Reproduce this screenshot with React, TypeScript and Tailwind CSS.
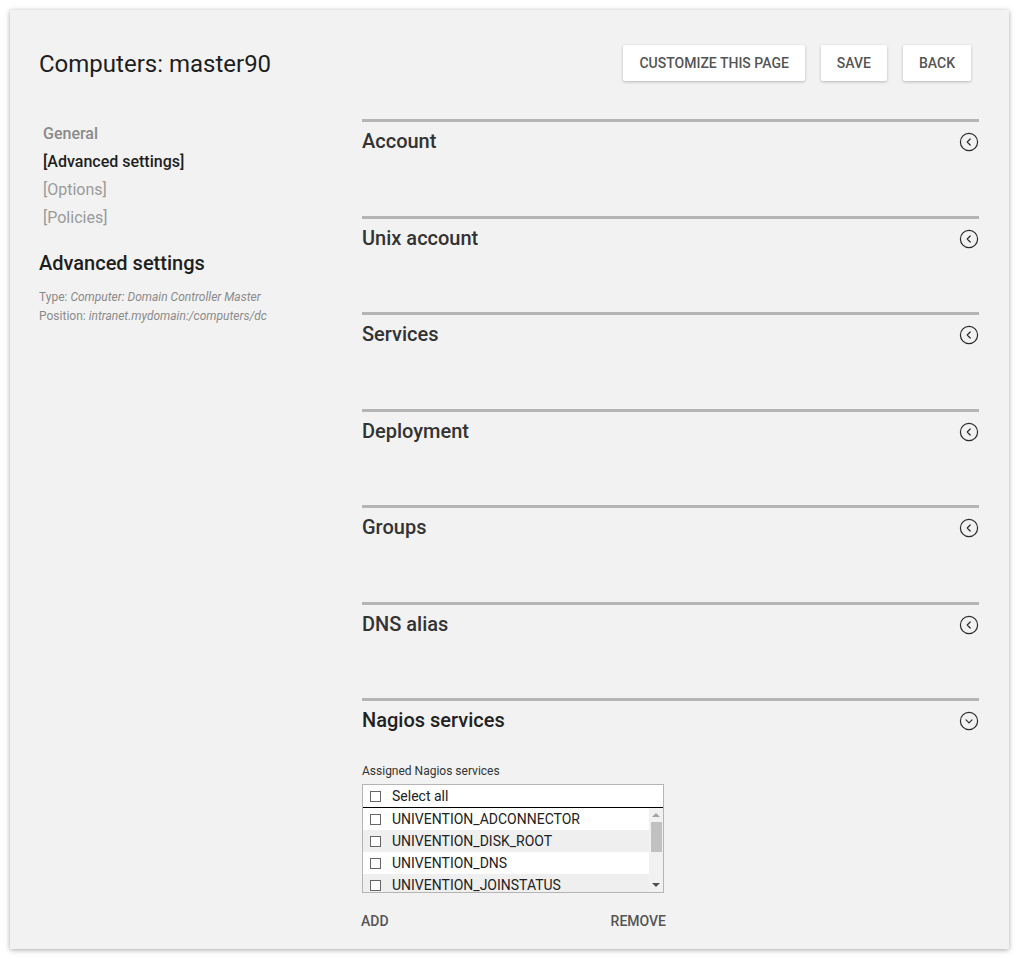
import React from "react";

const font = { fontFamily: "Roboto, 'Noto Sans', Arial, sans-serif" };

function CircleIcon({ down = false }: { down?: boolean }) {
  return (
    <svg width="20" height="20" viewBox="0 0 20 20" fill="none">
      <circle cx="10" cy="10" r="8.6" stroke="#2b2b2b" strokeWidth="1.2" />
      {down ? (
        <path d="M7 8.8 L10 11.8 L13 8.8" stroke="#2b2b2b" strokeWidth="1.2" strokeLinecap="round" strokeLinejoin="round" />
      ) : (
        <path d="M11.2 7 L8.2 10 L11.2 13" stroke="#2b2b2b" strokeWidth="1.2" strokeLinecap="round" strokeLinejoin="round" />
      )}
    </svg>
  );
}

function Checkbox() {
  return <span className="inline-block w-[11px] h-[11px] border-[1.5px] border-[#666] bg-white shrink-0" />;
}

const sections = ["Account", "Unix account", "Services", "Deployment", "Groups", "DNS alias"];
const services = [
  "UNIVENTION_ADCONNECTOR",
  "UNIVENTION_DISK_ROOT",
  "UNIVENTION_DNS",
  "UNIVENTION_JOINSTATUS",
];

export default function App() {
  return (
    <div className="bg-white min-h-screen p-[10px]" style={font}>
      <div className="bg-[#f2f2f2] shadow-[0_1px_5px_rgba(0,0,0,0.35)] h-[939px] w-[999px] pt-[35px]">
        {/* header */}
        <div className="h-[36px] flex items-start justify-between pl-[29px] pr-[38px]">
          <h1 className="text-[24px] leading-[38px] text-[#1e1e1e] font-normal">Computers: master90</h1>
          <div className="flex gap-4">
            {["Customize this page", "Save", "Back"].map((b) => (
              <button
                key={b}
                className="h-[36px] px-4 pt-[1px] bg-white rounded-[2px] shadow-[0_1px_3px_rgba(0,0,0,0.25)] text-[14px] font-medium uppercase text-[#555]"
              >
                {b}
              </button>
            ))}
          </div>
        </div>

        {/* body */}
        <div className="flex pl-[29px] mt-[38px]">
          <div className="w-[323px] shrink-0 pt-[1px]">
            <div className="pl-1 text-[16px] leading-[28px]">
              <div className="font-medium text-[#8a8a8a]">General</div>
              <div className="font-medium text-[#1e1e1e]">[Advanced settings]</div>
              <div className="text-[#9a9a9a]">[Options]</div>
              <div className="text-[#9a9a9a]">[Policies]</div>
            </div>
            <h2 className="mt-[17px] text-[20px] leading-[28px] font-medium text-[#1e1e1e]">Advanced settings</h2>
            <div className="mt-[11px] text-[12px] leading-[19px] text-[#8a8a8a]">
              <div>
                Type: <span className="italic">Computer: Domain Controller Master</span>
              </div>
              <div>
                Position: <span className="italic">intranet.mydomain:/computers/dc</span>
              </div>
            </div>
          </div>

          <div className="w-[617px]">
            {sections.map((s) => (
              <div key={s} className="h-[96.5px] border-t-[3px] border-[#b5b5b5] pt-[5px]">
                <div className="flex items-center justify-between">
                  <span className="text-[20px] leading-[28px] font-medium text-[#333]">{s}</span>
                  <span className="mt-[2px]">
                    <CircleIcon />
                  </span>
                </div>
              </div>
            ))}
            <div className="border-t-[3px] border-[#b5b5b5] pt-[5px]">
              <div className="flex items-center justify-between">
                <span className="text-[20px] leading-[28px] font-medium text-[#222]">Nagios services</span>
                <span className="mt-[2px]">
                  <CircleIcon down />
                </span>
              </div>
              <div className="mt-[29px] text-[12px] leading-[16px] text-[#333]">Assigned Nagios services</div>
              <div className="mt-[5px] w-[302px] h-[109px] border border-[#b5b5b5] bg-white flex flex-col overflow-hidden">
                <div className="h-[23px] shrink-0 border-b border-black flex items-center gap-[11px] pl-[7px] text-[14px] text-[#222]">
                  <Checkbox />
                  <span>Select all</span>
                </div>
                <div className="flex flex-1 min-h-0">
                  <div className="flex-1">
                    {services.map((s, i) => (
                      <div
                        key={s}
                        className={`h-[22px] flex items-center gap-[11px] pl-[7px] text-[14px] text-[#222] ${i % 2 === 1 ? "bg-[#efefef]" : "bg-white"}`}
                      >
                        <Checkbox />
                        <span>{s}</span>
                      </div>
                    ))}
                  </div>
                  <div className="w-[14px] bg-[#f1f1f1] flex flex-col items-center">
                    <div className="h-[14px] flex items-center justify-center">
                      <span className="block w-0 h-0 border-l-[4px] border-r-[4px] border-b-[4px] border-l-transparent border-r-transparent border-b-[#a3a3a3]" />
                    </div>
                    <div className="w-[11px] h-[30px] bg-[#c1c1c1]" />
                    <div className="flex-1" />
                    <div className="h-[14px] flex items-center justify-center">
                      <span className="block w-0 h-0 border-l-[4px] border-r-[4px] border-t-[4px] border-l-transparent border-r-transparent border-t-[#505050]" />
                    </div>
                  </div>
                </div>
              </div>
              <div className="mt-[18px] w-[305px] -ml-[1px] flex justify-between text-[14px] leading-[20px] font-medium text-[#555] uppercase">
                <span>Add</span>
                <span>Remove</span>
              </div>
            </div>
          </div>
        </div>
      </div>
    </div>
  );
}
